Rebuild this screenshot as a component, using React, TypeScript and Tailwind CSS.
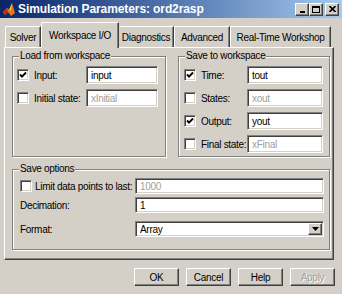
import React from "react";

const sunken =
  "border border-t-[#808080] border-l-[#808080] border-r-white border-b-white shadow-[inset_1px_1px_0_#404040,inset_-1px_-1px_0_#d4d0c8]";
const raised =
  "border border-t-white border-l-white border-r-[#404040] border-b-[#404040] shadow-[inset_-1px_-1px_0_#808080]";

function Check({ on }: { on?: boolean }) {
  return (
    <span className={`flex h-[12px] w-[12px] shrink-0 items-center justify-center bg-white ${sunken}`}>
      {on && (
        <svg width="8" height="8" viewBox="0 0 8 8">
          <path d="M1 3.5 L3 5.7 L7 1.5" fill="none" stroke="#000" strokeWidth="1.9" />
        </svg>
      )}
    </span>
  );
}

function Field({ value, disabled, className = "" }: { value: string; disabled?: boolean; className?: string }) {
  return (
    <div
      className={`flex items-center bg-white pl-[4px] ${sunken} ${disabled ? "text-[#a0a0a0]" : "text-black"} ${className}`}
    >
      {value}
    </div>
  );
}

function Group({ label, className = "", children }: { label: string; className?: string; children?: React.ReactNode }) {
  return (
    <div className={`relative border border-[#808080] shadow-[inset_1px_1px_0_#fff,1px_1px_0_#fff] ${className}`}>
      <span className="absolute -top-[7px] left-[6px] bg-[#d4d0c8] px-[1px] leading-[12px]">{label}</span>
      {children}
    </div>
  );
}

function CheckRow({ label, on, value, disabled, field }: { label: string; on?: boolean; value: string; disabled?: boolean; field: string }) {
  return (
    <div className="flex h-[18px] items-center">
      <Check on={on} />
      <span className="ml-[5px]">{label}</span>
      <Field value={value} disabled={disabled} className={`ml-auto h-[18px] ${field}`} />
    </div>
  );
}

function CaptionButton({ children, className = "" }: { children: React.ReactNode; className?: string }) {
  return (
    <div className={`flex h-[13px] w-[14px] items-center justify-center bg-[#d4d0c8] ${raised} ${className}`}>{children}</div>
  );
}

function Button({ label, disabled }: { label: string; disabled?: boolean }) {
  return (
    <div
      className={`flex h-[18px] w-[45px] items-center justify-center bg-[#d4d0c8] ${raised} ${
        disabled ? "text-[#a0a0a0] [text-shadow:1px_1px_0_#fff]" : "text-black"
      }`}
    >
      {label}
    </div>
  );
}

export default function App() {
  return (
    <div className="h-[294px] w-[342px] overflow-hidden bg-[#d4d0c8] font-['Liberation_Sans',Arial,sans-serif] text-[10px] tracking-[-0.3px] text-black">
      {/* title bar */}
      <div className="flex h-[18px] items-center bg-gradient-to-r from-[#0a246a] to-[#a6caf0] pl-[3px] pr-[3px]">
        <svg width="12" height="13" viewBox="0 0 12 13">
          <path d="M0 9 L4 5 L6 7 L9 0 L12 10 L8 13 L5 9 L2 12 Z" fill="#e8741c" />
          <path d="M4 5 L6 7 L9 0 L8 8 Z" fill="#f5c03a" />
          <path d="M0 9 L4 5 L5 9 L2 12 Z" fill="#b8321a" />
        </svg>
        <span className="ml-[3px] text-[12px] font-bold tracking-[-0.1px] text-white">Simulation Parameters: ord2rasp</span>
        <div className="ml-auto flex items-center">
          <CaptionButton>
            <span className="mt-[5px] block h-[2px] w-[5px] bg-black" />
          </CaptionButton>
          <CaptionButton>
            <span className="block h-[7px] w-[8px] border border-t-2 border-black" />
          </CaptionButton>
          <CaptionButton className="ml-[2px]">
            <svg width="7" height="6" viewBox="0 0 7 6">
              <path d="M0.5 0 L6.5 6 M6.5 0 L0.5 6" stroke="#000" strokeWidth="1.6" />
            </svg>
          </CaptionButton>
        </div>
      </div>

      <div className="pl-[4px] pt-[4px]">
        {/* tabs */}
        <div className="flex h-[25px] items-end pl-[1px]">
          <div className="flex h-[21px] w-[36px] items-center justify-center rounded-tl-[2px] border-l border-t border-r border-l-white border-t-white border-r-[#404040] shadow-[inset_-1px_0_0_#808080]">
            Solver
          </div>
          <div className="relative z-10 -mb-[1px] flex h-[26px] w-[78px] items-start justify-center rounded-tl-[2px] border-l border-t border-r border-l-white border-t-white border-r-[#404040] bg-[#d4d0c8] pt-[5px] shadow-[inset_-1px_0_0_#808080]">
            Workspace I/O
          </div>
          <div className="flex h-[21px] w-[55px] items-center justify-center rounded-tl-[2px] border-t border-r border-t-white border-r-[#404040] shadow-[inset_-1px_0_0_#808080]">
            Diagnostics
          </div>
          <div className="flex h-[21px] w-[56px] items-center justify-center rounded-tl-[2px] border-l border-t border-r border-l-white border-t-white border-r-[#404040] shadow-[inset_-1px_0_0_#808080]">
            Advanced
          </div>
          <div className="flex h-[21px] w-[101px] items-center justify-center rounded-tl-[2px] border-l border-t border-r border-l-white border-t-white border-r-[#404040] shadow-[inset_-1px_0_0_#808080]">
            Real-Time Workshop
          </div>
        </div>

        {/* panel */}
        <div className={`h-[213px] w-[330px] pl-[7px] pt-[8px] ${raised}`}>
          <div className="flex gap-[12px]">
            <Group label="Load from workspace" className="h-[101px] w-[154px]">
              <div className="flex flex-col gap-[5px] pl-[4px] pr-[7px] pt-[9px]">
                <CheckRow label="Input:" on value="input" field="w-[72px]" />
                <CheckRow label="Initial state:" value="xInitial" disabled field="w-[72px]" />
              </div>
            </Group>
            <Group label="Save to workspace" className="h-[101px] w-[152px]">
              <div className="flex flex-col gap-[5px] pl-[5px] pr-[6px] pt-[9px]">
                <CheckRow label="Time:" on value="tout" field="w-[76px]" />
                <CheckRow label="States:" value="xout" disabled field="w-[76px]" />
                <CheckRow label="Output:" on value="yout" field="w-[76px]" />
                <CheckRow label="Final state:" value="xFinal" disabled field="w-[76px]" />
              </div>
            </Group>
          </div>

          <Group label="Save options" className="mt-[12px] h-[81px] w-[318px]">
            <div className="flex flex-col pl-[7px] pr-[5px] pt-[8px]">
              <div className="flex h-[16px] items-center">
                <Check />
                <span className="ml-[3px]">Limit data points to last:</span>
                <Field value="1000" disabled className="ml-auto h-[16px] w-[189px]" />
              </div>
              <div className="mt-[3px] flex h-[16px] items-center">
                <span>Decimation:</span>
                <Field value="1" className="ml-auto h-[16px] w-[189px]" />
              </div>
              <div className="mt-[8px] flex h-[16px] items-center">
                <span>Format:</span>
                <div className={`ml-auto flex h-[16px] w-[189px] items-center bg-white pl-[4px] pr-[1px] ${sunken}`}>
                  <span>Array</span>
                  <div className={`ml-auto flex h-[12px] w-[14px] items-center justify-center bg-[#d4d0c8] ${raised}`}>
                    <svg width="7" height="4" viewBox="0 0 7 4">
                      <path d="M0 0 H7 L3.5 4 Z" fill="#000" />
                    </svg>
                  </div>
                </div>
              </div>
            </div>
          </Group>
        </div>
      </div>

      {/* dialog buttons */}
      <div className="mt-[8px] flex justify-end gap-[7px] pr-[7px]">
        <Button label="OK" />
        <Button label="Cancel" />
        <Button label="Help" />
        <Button label="Apply" disabled />
      </div>
    </div>
  );
}
